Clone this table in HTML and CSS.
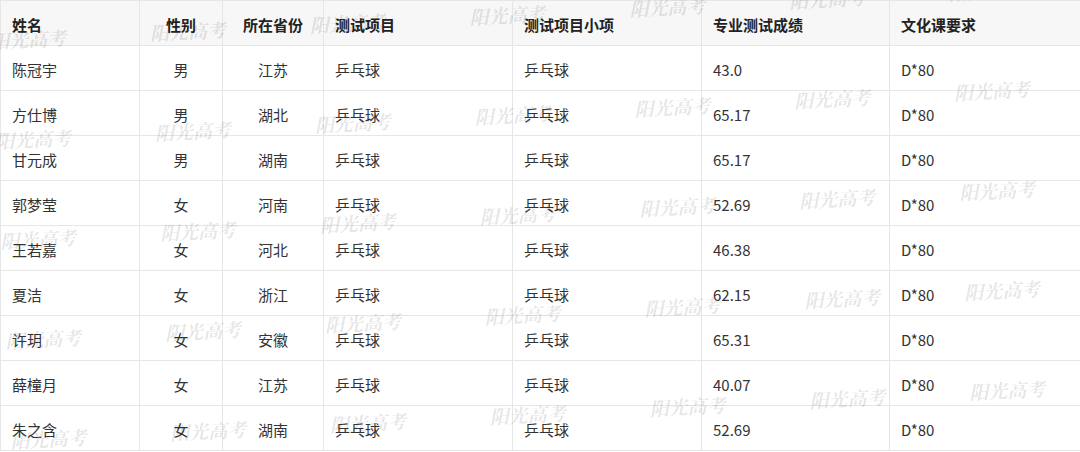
FILE: index.html
```html
<!DOCTYPE html>
<html lang="zh-CN">
<head>
<meta charset="utf-8">
<title>乒乓球测试成绩</title>
<link rel="stylesheet" href="styles.css">
</head>
<body>
<div class="sheet">
  <table class="scores">
    <colgroup>
      <col class="c-name"><col class="c-sex"><col class="c-prov"><col class="c-item"><col class="c-sub"><col class="c-score"><col class="c-req">
    </colgroup>
    <thead>
      <tr><th>姓名</th><th class="mid">性别</th><th class="mid">所在省份</th><th>测试项目</th><th>测试项目小项</th><th>专业测试成绩</th><th>文化课要求</th></tr>
    </thead>
    <tbody>
      <tr><td>陈冠宇</td><td class="mid">男</td><td class="mid">江苏</td><td>乒乓球</td><td>乒乓球</td><td>43.0</td><td>D*80</td></tr>
      <tr><td>方仕博</td><td class="mid">男</td><td class="mid">湖北</td><td>乒乓球</td><td>乒乓球</td><td>65.17</td><td>D*80</td></tr>
      <tr><td>甘元成</td><td class="mid">男</td><td class="mid">湖南</td><td>乒乓球</td><td>乒乓球</td><td>65.17</td><td>D*80</td></tr>
      <tr><td>郭梦莹</td><td class="mid">女</td><td class="mid">河南</td><td>乒乓球</td><td>乒乓球</td><td>52.69</td><td>D*80</td></tr>
      <tr><td>王若嘉</td><td class="mid">女</td><td class="mid">河北</td><td>乒乓球</td><td>乒乓球</td><td>46.38</td><td>D*80</td></tr>
      <tr><td>夏洁</td><td class="mid">女</td><td class="mid">浙江</td><td>乒乓球</td><td>乒乓球</td><td>62.15</td><td>D*80</td></tr>
      <tr><td>许玥</td><td class="mid">女</td><td class="mid">安徽</td><td>乒乓球</td><td>乒乓球</td><td>65.31</td><td>D*80</td></tr>
      <tr><td>薛橦月</td><td class="mid">女</td><td class="mid">江苏</td><td>乒乓球</td><td>乒乓球</td><td>40.07</td><td>D*80</td></tr>
      <tr><td>朱之含</td><td class="mid">女</td><td class="mid">湖南</td><td>乒乓球</td><td>乒乓球</td><td>52.69</td><td>D*80</td></tr>
    </tbody>
  </table>
  <div class="watermarks" aria-hidden="true">
    <span>阳光高考</span><span>阳光高考</span><span>阳光高考</span><span>阳光高考</span><span>阳光高考</span><span>阳光高考</span><span>阳光高考</span><span>阳光高考</span>
    <span>阳光高考</span><span>阳光高考</span><span>阳光高考</span><span>阳光高考</span><span>阳光高考</span><span>阳光高考</span><span>阳光高考</span><span>阳光高考</span>
    <span>阳光高考</span><span>阳光高考</span><span>阳光高考</span><span>阳光高考</span><span>阳光高考</span><span>阳光高考</span><span>阳光高考</span><span>阳光高考</span>
    <span>阳光高考</span><span>阳光高考</span><span>阳光高考</span><span>阳光高考</span><span>阳光高考</span><span>阳光高考</span><span>阳光高考</span><span>阳光高考</span>
    <span>阳光高考</span><span>阳光高考</span><span>阳光高考</span><span>阳光高考</span><span>阳光高考</span><span>阳光高考</span><span>阳光高考</span><span>阳光高考</span>
    <span>阳光高考</span><span>阳光高考</span><span>阳光高考</span><span>阳光高考</span><span>阳光高考</span><span>阳光高考</span><span>阳光高考</span><span>阳光高考</span>
  </div>
</div>
</body>
</html>
```

FILE: styles.css
```css
html, body {
  margin: 0;
  padding: 0;
  background: #ffffff;
}

body {
  font-family: "Noto Sans CJK SC", "Noto Sans", sans-serif;
  color: #333333;
  font-size: 15px;
}

.sheet {
  position: relative;
  width: 1080px;
  height: 452px;
  overflow: hidden;
}

.scores {
  border-collapse: collapse;
  table-layout: fixed;
  width: 1080px;
}

.c-name { width: 139px; }
.c-sex { width: 83px; }
.c-prov { width: 101px; }
.c-item { width: 189px; }
.c-sub { width: 189px; }
.c-score { width: 188px; }
.c-req { width: 191px; }

.scores th,
.scores td {
  border: 1px solid #e6e6e6;
  height: 45px;
  padding: 3px 11px 0 11px;
  box-sizing: border-box;
  text-align: left;
  vertical-align: middle;
  white-space: nowrap;
  line-height: 20px;
}

.scores th {
  background: #f7f7f7;
  font-weight: 700;
  color: #222222;
}

.scores td {
  font-weight: 400;
}

.scores .mid {
  text-align: center;
}

.watermarks {
  position: absolute;
  left: -52px;
  top: -12px;
  display: grid;
  grid-template-columns: repeat(8, 160px);
  grid-auto-rows: 100px;
  transform-origin: 80px 50px;
  transform: rotate(-2.9deg);
  pointer-events: none;
}

.watermarks span {
  display: flex;
  align-items: center;
  justify-content: center;
  font-family: "Noto Serif CJK SC", "Noto Sans CJK SC", serif;
  font-size: 19px;
  font-weight: 700;
  font-style: italic;
  color: rgba(0, 0, 0, 0.11);
  white-space: nowrap;
}
```
